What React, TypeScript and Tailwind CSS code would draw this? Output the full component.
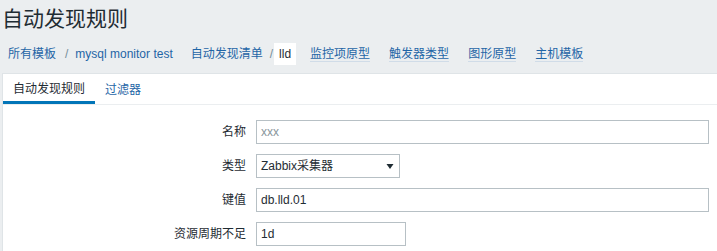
import React from "react";

const font = { fontFamily: '"Liberation Sans", "Noto Sans CJK SC", Arial, sans-serif' };

function Row({ label, children }: { label: string; children: React.ReactNode }) {
  return (
    <div className="flex items-center h-[24px]">
      <div className="w-[243px] text-right text-[12px] text-[#1f2c33]">{label}</div>
      <div className="ml-[10px] flex">{children}</div>
    </div>
  );
}

export default function App() {
  return (
    <div style={font} className="w-[717px] h-[251px] bg-[#ebeef0] overflow-hidden">
      <div className="h-[37px] pl-[2px] flex items-center">
        <h1 className="text-[21px] leading-none text-[#1f2c33] font-normal">自动发现规则</h1>
      </div>
      <div className="h-[36px] flex items-center text-[12px] pb-[2px]">
        <a className="ml-[8px] text-[#1f65a6]">所有模板</a>
        <span className="ml-[9px] text-[#768d99]">/</span>
        <a className="ml-[7px] text-[#1f65a6]">mysql monitor test</a>
        <a className="ml-[18px] text-[#1f65a6]">自动发现清单</a>
        <span className="ml-[7px] text-[#768d99]">/</span>
        <span className="ml-[1px] h-[22px] px-[5px] bg-white text-[#1f2c33] flex items-center">lld</span>
        <a className="ml-[14px] text-[#1f65a6] border-b border-[#d0dce8] leading-[14px]">监控项原型</a>
        <a className="ml-[19px] text-[#1f65a6] border-b border-[#d0dce8] leading-[14px]">触发器类型</a>
        <a className="ml-[19px] text-[#1f65a6] border-b border-[#d0dce8] leading-[14px]">图形原型</a>
        <a className="ml-[19px] text-[#1f65a6] border-b border-[#d0dce8] leading-[14px]">主机模板</a>
      </div>
      <div className="ml-[2px] bg-white border-t border-l border-[#dfe4e7] h-full">
        <div className="h-[31px] flex items-end border-b border-[#ebeef0] text-[12px]">
          <div className="w-[92px] h-[31px] flex items-center justify-center border-b-[3px] border-[#0275b8] text-[#1f2c33] pt-[3px]">
            自动发现规则
          </div>
          <div className="ml-[10px] h-[31px] flex items-center text-[#1f65a6] pt-[3px]">过滤器</div>
        </div>
        <div className="pt-[15px] flex flex-col gap-[10px]">
          <Row label="名称">
            <div className="w-[453px] h-[24px] border border-[#b7c0c5] flex items-center pl-[4px] text-[12px] text-[#8a969c]">xxx</div>
          </Row>
          <Row label="类型">
            <div className="w-[144px] h-[24px] border border-[#b7c0c5] flex items-center pl-[4px] text-[12px] text-[#1f2c33] justify-between">
              <span>Zabbix采集器</span>
              <svg width="8" height="7" viewBox="0 0 8 7" className="mr-[5px]">
                <path d="M0.5 1 L7.5 1 L4 6 Z" fill="#1f2c33" />
              </svg>
            </div>
          </Row>
          <Row label="键值">
            <div className="w-[453px] h-[24px] border border-[#b7c0c5] flex items-center pl-[4px] text-[12px] text-[#1f2c33]">db.lld.01</div>
          </Row>
          <Row label="资源周期不足">
            <div className="w-[150px] h-[24px] border border-[#b7c0c5] flex items-center pl-[4px] text-[12px] text-[#1f2c33]">1d</div>
          </Row>
        </div>
      </div>
    </div>
  );
}
